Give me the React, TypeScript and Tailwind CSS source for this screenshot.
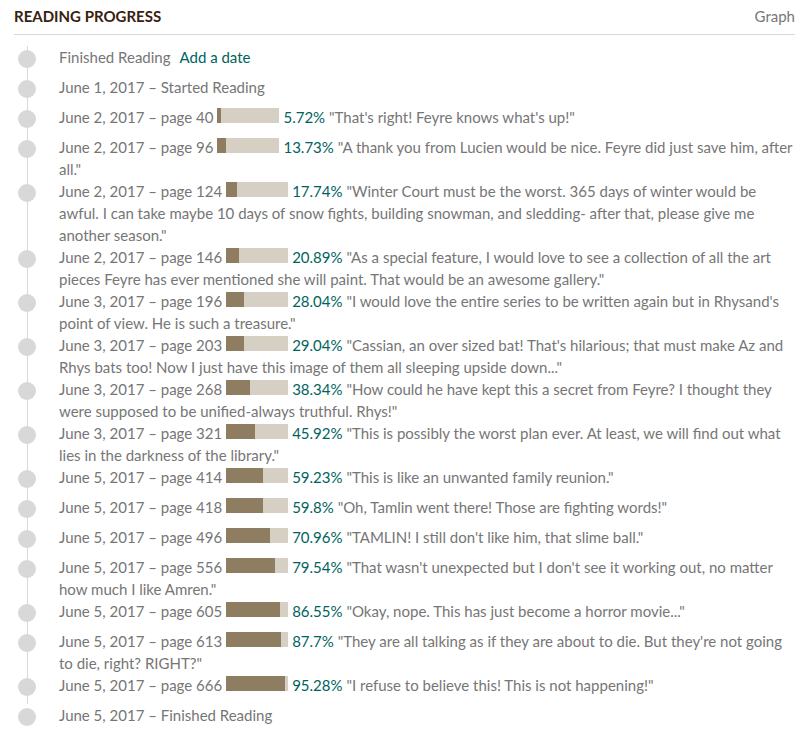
import React from "react";

type Entry = { date: string; page?: number; pct?: string; quote?: string; label?: string };

const entries: Entry[] = [
  { date: "June 2, 2017", page: 40, pct: "5.72", quote: "\"That's right! Feyre knows what's up!\"" },
  { date: "June 2, 2017", page: 96, pct: "13.73", quote: "\"A thank you from Lucien would be nice. Feyre did just save him, after all.\"" },
  { date: "June 2, 2017", page: 124, pct: "17.74", quote: "\"Winter Court must be the worst. 365 days of winter would be awful. I can take maybe 10 days of snow fights, building snowman, and sledding- after that, please give me another season.\"" },
  { date: "June 2, 2017", page: 146, pct: "20.89", quote: "\"As a special feature, I would love to see a collection of all the art pieces Feyre has ever mentioned she will paint. That would be an awesome gallery.\"" },
  { date: "June 3, 2017", page: 196, pct: "28.04", quote: "\"I would love the entire series to be written again but in Rhysand's point of view. He is such a treasure.\"" },
  { date: "June 3, 2017", page: 203, pct: "29.04", quote: "\"Cassian, an over sized bat! That's hilarious; that must make Az and Rhys bats too! Now I just have this image of them all sleeping upside down...\"" },
  { date: "June 3, 2017", page: 268, pct: "38.34", quote: "\"How could he have kept this a secret from Feyre? I thought they were supposed to be unified-always truthful. Rhys!\"" },
  { date: "June 3, 2017", page: 321, pct: "45.92", quote: "\"This is possibly the worst plan ever. At least, we will find out what lies in the darkness of the library.\"" },
  { date: "June 5, 2017", page: 414, pct: "59.23", quote: "\"This is like an unwanted family reunion.\"" },
  { date: "June 5, 2017", page: 418, pct: "59.8", quote: "\"Oh, Tamlin went there! Those are fighting words!\"" },
  { date: "June 5, 2017", page: 496, pct: "70.96", quote: "\"TAMLIN! I still don't like him, that slime ball.\"" },
  { date: "June 5, 2017", page: 556, pct: "79.54", quote: "\"That wasn't unexpected but I don't see it working out, no matter how much I like Amren.\"" },
  { date: "June 5, 2017", page: 605, pct: "86.55", quote: "\"Okay, nope. This has just become a horror movie...\"" },
  { date: "June 5, 2017", page: 613, pct: "87.7", quote: "\"They are all talking as if they are about to die. But they're not going to die, right? RIGHT?\"" },
  { date: "June 5, 2017", page: 666, pct: "95.28", quote: "\"I refuse to believe this! This is not happening!\"" },
];

function Row({ children }: { children: React.ReactNode }) {
  return (
    <div className="flex min-h-[30px]">
      <div className="w-[45px] shrink-0 pl-[4px] pt-[4px]">
        <div className="w-[18px] h-[18px] rounded-full bg-[#d8d8d8]" />
      </div>
      <div className="flex-1 min-w-0">{children}</div>
    </div>
  );
}

function Bar({ pct }: { pct: string }) {
  const w = (parseFloat(pct) / 100) * 62;
  return (
    <span className="inline-block w-[62px] h-[15px] bg-[#d6d0c4] ml-[4px] mr-[4px] align-baseline">
      <span className="block h-full bg-[#8f7d61]" style={{ width: `${w}px` }} />
    </span>
  );
}

export default function App() {
  return (
    <div
      className="w-[805px] h-[736px] bg-white pl-[14px] pr-[10px] overflow-hidden"
      style={{ fontFamily: "Lato, 'Noto Sans', sans-serif" }}
    >
      <div className="flex justify-between items-baseline border-b border-[#d8d8d8] pt-[5px] pb-[7px]">
        <div className="text-[15px] font-bold text-[#382110] leading-[22px]">READING PROGRESS</div>
        <div className="text-[15px] text-[#767676] leading-[22px]">Graph</div>
      </div>
      <div className="relative mt-[11px] text-[15px] leading-[22px] text-[#767676]">
        <div className="absolute left-[13px] top-0 bottom-[30px] w-px bg-[#d8d8d8]" />
        <div className="relative">
          <Row>
            Finished Reading<span className="ml-[9px] text-[#00635d]">Add a date</span>
          </Row>
          <Row>June 1, 2017 – Started Reading</Row>
          {entries.map((e, i) => (
            <Row key={i}>
              {e.date} – page {e.page}
              <Bar pct={e.pct!} />
              <span className="text-[#00635d]">{e.pct}%</span> {e.quote}
            </Row>
          ))}
          <Row>June 5, 2017 – Finished Reading</Row>
        </div>
      </div>
    </div>
  );
}
